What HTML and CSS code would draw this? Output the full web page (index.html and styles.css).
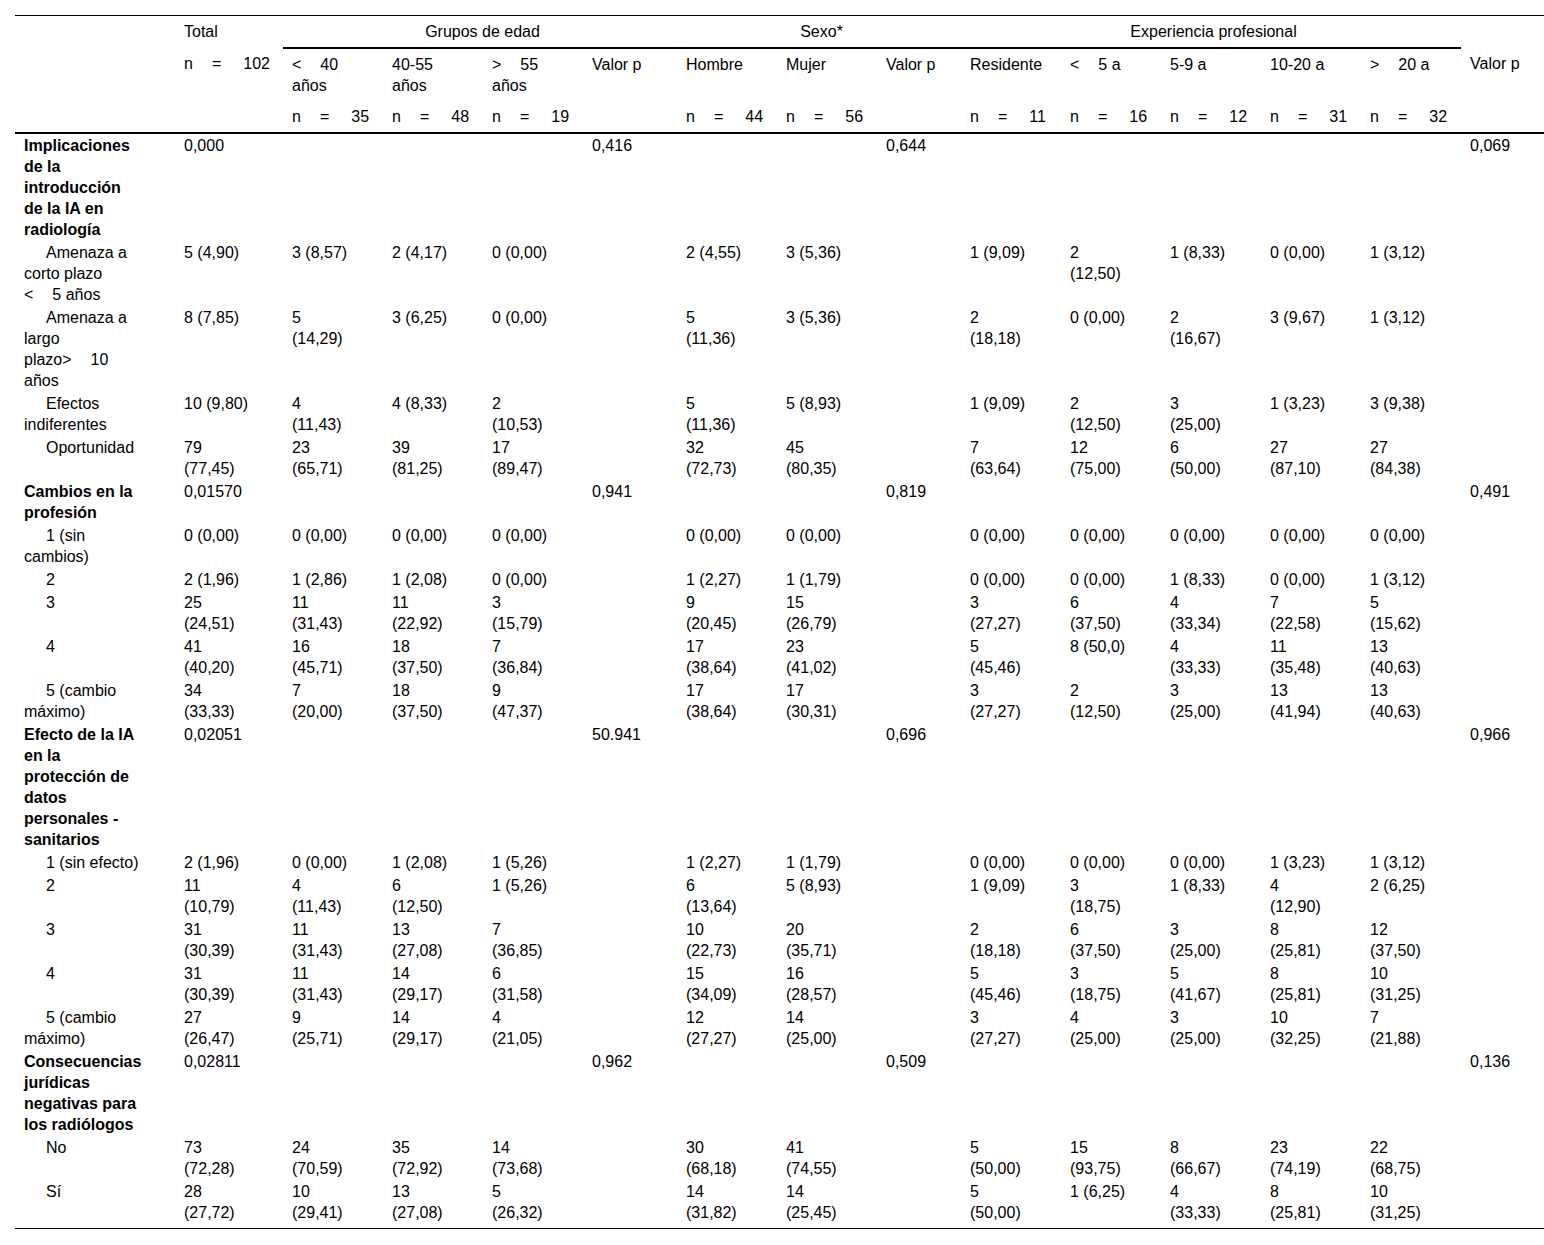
FILE: index.html
```html
<!DOCTYPE html>
<html lang="es">
<head>
<meta charset="utf-8">
<title>Tabla</title>
<link rel="stylesheet" href="styles.css">
</head>
<body>
<div class="wrap">
<table class="tbl">
<colgroup>
<col class="c0"><col class="ct"><col class="cd"><col class="cd"><col class="cd"><col class="cp1"><col class="cd"><col class="cd"><col class="cp2"><col class="cd"><col class="cd"><col class="cd"><col class="cd"><col class="cd"><col class="cp3">
</colgroup>
<thead>
<tr class="h1">
<th></th>
<th>Total</th>
<th colspan="4" class="grp">Grupos de edad</th>
<th colspan="3" class="grp">Sexo*</th>
<th colspan="5" class="grp">Experiencia profesional</th>
<th></th>
</tr>
<tr class="h2">
<th></th>
<th>n<i class="g1"></i>=<i class="g2"></i>102</th>
<th>&lt;<i class="g"></i>40<br>años</th>
<th>40-55<br>años</th>
<th>&gt;<i class="g"></i>55<br>años</th>
<th>Valor p</th>
<th>Hombre</th>
<th>Mujer</th>
<th>Valor p</th>
<th>Residente</th>
<th>&lt;<i class="g"></i>5 a</th>
<th>5-9 a</th>
<th>10-20 a</th>
<th>&gt;<i class="g"></i>20 a</th>
<th>Valor p</th>
</tr>
<tr class="h3">
<th></th>
<th></th>
<th>n<i class="g1"></i>=<i class="g2"></i>35</th>
<th>n<i class="g1"></i>=<i class="g2"></i>48</th>
<th>n<i class="g1"></i>=<i class="g2"></i>19</th>
<th></th>
<th>n<i class="g1"></i>=<i class="g2"></i>44</th>
<th>n<i class="g1"></i>=<i class="g2"></i>56</th>
<th></th>
<th>n<i class="g1"></i>=<i class="g2"></i>11</th>
<th>n<i class="g1"></i>=<i class="g2"></i>16</th>
<th>n<i class="g1"></i>=<i class="g2"></i>12</th>
<th>n<i class="g1"></i>=<i class="g2"></i>31</th>
<th>n<i class="g1"></i>=<i class="g2"></i>32</th>
<th></th>
</tr>
</thead>
<tbody>
<tr>
<td class="lab sec">Implicaciones de la introducción de la IA en radiología</td>
<td>0,000</td><td></td><td></td><td></td><td>0,416</td><td></td><td></td><td>0,644</td><td></td><td></td><td></td><td></td><td></td><td>0,069</td>
</tr>
<tr>
<td class="lab sub">Amenaza a<br>corto plazo<br>&lt;<i class="g"></i>5 años</td>
<td>5 (4,90)</td><td>3 (8,57)</td><td>2 (4,17)</td><td>0 (0,00)</td><td></td><td>2 (4,55)</td><td>3 (5,36)</td><td></td><td>1 (9,09)</td><td>2<br>(12,50)</td><td>1 (8,33)</td><td>0 (0,00)</td><td>1 (3,12)</td><td></td>
</tr>
<tr>
<td class="lab sub">Amenaza a<br>largo<br>plazo&gt;<i class="g"></i>10<br>años</td>
<td>8 (7,85)</td><td>5<br>(14,29)</td><td>3 (6,25)</td><td>0 (0,00)</td><td></td><td>5<br>(11,36)</td><td>3 (5,36)</td><td></td><td>2<br>(18,18)</td><td>0 (0,00)</td><td>2<br>(16,67)</td><td>3 (9,67)</td><td>1 (3,12)</td><td></td>
</tr>
<tr>
<td class="lab sub">Efectos indiferentes</td>
<td>10 (9,80)</td><td>4<br>(11,43)</td><td>4 (8,33)</td><td>2<br>(10,53)</td><td></td><td>5<br>(11,36)</td><td>5 (8,93)</td><td></td><td>1 (9,09)</td><td>2<br>(12,50)</td><td>3<br>(25,00)</td><td>1 (3,23)</td><td>3 (9,38)</td><td></td>
</tr>
<tr>
<td class="lab sub">Oportunidad</td>
<td>79<br>(77,45)</td><td>23<br>(65,71)</td><td>39<br>(81,25)</td><td>17<br>(89,47)</td><td></td><td>32<br>(72,73)</td><td>45<br>(80,35)</td><td></td><td>7<br>(63,64)</td><td>12<br>(75,00)</td><td>6<br>(50,00)</td><td>27<br>(87,10)</td><td>27<br>(84,38)</td><td></td>
</tr>
<tr>
<td class="lab sec">Cambios en la profesión</td>
<td>0,01570</td><td></td><td></td><td></td><td>0,941</td><td></td><td></td><td>0,819</td><td></td><td></td><td></td><td></td><td></td><td>0,491</td>
</tr>
<tr>
<td class="lab sub">1 (sin cambios)</td>
<td>0 (0,00)</td><td>0 (0,00)</td><td>0 (0,00)</td><td>0 (0,00)</td><td></td><td>0 (0,00)</td><td>0 (0,00)</td><td></td><td>0 (0,00)</td><td>0 (0,00)</td><td>0 (0,00)</td><td>0 (0,00)</td><td>0 (0,00)</td><td></td>
</tr>
<tr>
<td class="lab sub">2</td>
<td>2 (1,96)</td><td>1 (2,86)</td><td>1 (2,08)</td><td>0 (0,00)</td><td></td><td>1 (2,27)</td><td>1 (1,79)</td><td></td><td>0 (0,00)</td><td>0 (0,00)</td><td>1 (8,33)</td><td>0 (0,00)</td><td>1 (3,12)</td><td></td>
</tr>
<tr>
<td class="lab sub">3</td>
<td>25<br>(24,51)</td><td>11<br>(31,43)</td><td>11<br>(22,92)</td><td>3<br>(15,79)</td><td></td><td>9<br>(20,45)</td><td>15<br>(26,79)</td><td></td><td>3<br>(27,27)</td><td>6<br>(37,50)</td><td>4<br>(33,34)</td><td>7<br>(22,58)</td><td>5<br>(15,62)</td><td></td>
</tr>
<tr>
<td class="lab sub">4</td>
<td>41<br>(40,20)</td><td>16<br>(45,71)</td><td>18<br>(37,50)</td><td>7<br>(36,84)</td><td></td><td>17<br>(38,64)</td><td>23<br>(41,02)</td><td></td><td>5<br>(45,46)</td><td>8 (50,0)</td><td>4<br>(33,33)</td><td>11<br>(35,48)</td><td>13<br>(40,63)</td><td></td>
</tr>
<tr>
<td class="lab sub">5 (cambio máximo)</td>
<td>34<br>(33,33)</td><td>7<br>(20,00)</td><td>18<br>(37,50)</td><td>9<br>(47,37)</td><td></td><td>17<br>(38,64)</td><td>17<br>(30,31)</td><td></td><td>3<br>(27,27)</td><td>2<br>(12,50)</td><td>3<br>(25,00)</td><td>13<br>(41,94)</td><td>13<br>(40,63)</td><td></td>
</tr>
<tr>
<td class="lab sec">Efecto de la IA en la protección de datos personales - sanitarios</td>
<td>0,02051</td><td></td><td></td><td></td><td>50.941</td><td></td><td></td><td>0,696</td><td></td><td></td><td></td><td></td><td></td><td>0,966</td>
</tr>
<tr>
<td class="lab sub">1 (sin efecto)</td>
<td>2 (1,96)</td><td>0 (0,00)</td><td>1 (2,08)</td><td>1 (5,26)</td><td></td><td>1 (2,27)</td><td>1 (1,79)</td><td></td><td>0 (0,00)</td><td>0 (0,00)</td><td>0 (0,00)</td><td>1 (3,23)</td><td>1 (3,12)</td><td></td>
</tr>
<tr>
<td class="lab sub">2</td>
<td>11<br>(10,79)</td><td>4<br>(11,43)</td><td>6<br>(12,50)</td><td>1 (5,26)</td><td></td><td>6<br>(13,64)</td><td>5 (8,93)</td><td></td><td>1 (9,09)</td><td>3<br>(18,75)</td><td>1 (8,33)</td><td>4<br>(12,90)</td><td>2 (6,25)</td><td></td>
</tr>
<tr>
<td class="lab sub">3</td>
<td>31<br>(30,39)</td><td>11<br>(31,43)</td><td>13<br>(27,08)</td><td>7<br>(36,85)</td><td></td><td>10<br>(22,73)</td><td>20<br>(35,71)</td><td></td><td>2<br>(18,18)</td><td>6<br>(37,50)</td><td>3<br>(25,00)</td><td>8<br>(25,81)</td><td>12<br>(37,50)</td><td></td>
</tr>
<tr>
<td class="lab sub">4</td>
<td>31<br>(30,39)</td><td>11<br>(31,43)</td><td>14<br>(29,17)</td><td>6<br>(31,58)</td><td></td><td>15<br>(34,09)</td><td>16<br>(28,57)</td><td></td><td>5<br>(45,46)</td><td>3<br>(18,75)</td><td>5<br>(41,67)</td><td>8<br>(25,81)</td><td>10<br>(31,25)</td><td></td>
</tr>
<tr>
<td class="lab sub">5 (cambio máximo)</td>
<td>27<br>(26,47)</td><td>9<br>(25,71)</td><td>14<br>(29,17)</td><td>4<br>(21,05)</td><td></td><td>12<br>(27,27)</td><td>14<br>(25,00)</td><td></td><td>3<br>(27,27)</td><td>4<br>(25,00)</td><td>3<br>(25,00)</td><td>10<br>(32,25)</td><td>7<br>(21,88)</td><td></td>
</tr>
<tr>
<td class="lab sec">Consecuencias jurídicas negativas para los radiólogos</td>
<td>0,02811</td><td></td><td></td><td></td><td>0,962</td><td></td><td></td><td>0,509</td><td></td><td></td><td></td><td></td><td></td><td>0,136</td>
</tr>
<tr>
<td class="lab sub">No</td>
<td>73<br>(72,28)</td><td>24<br>(70,59)</td><td>35<br>(72,92)</td><td>14<br>(73,68)</td><td></td><td>30<br>(68,18)</td><td>41<br>(74,55)</td><td></td><td>5<br>(50,00)</td><td>15<br>(93,75)</td><td>8<br>(66,67)</td><td>23<br>(74,19)</td><td>22<br>(68,75)</td><td></td>
</tr>
<tr class="last">
<td class="lab sub">Sí</td>
<td>28<br>(27,72)</td><td>10<br>(29,41)</td><td>13<br>(27,08)</td><td>5<br>(26,32)</td><td></td><td>14<br>(31,82)</td><td>14<br>(25,45)</td><td></td><td>5<br>(50,00)</td><td>1 (6,25)</td><td>4<br>(33,33)</td><td>8<br>(25,81)</td><td>10<br>(31,25)</td><td></td>
</tr>
</tbody>
</table>
</div>
</body>
</html>
```

FILE: styles.css
```css
html, body {
  margin: 0;
  padding: 0;
  background: #ffffff;
}

body {
  font-family: "Liberation Sans", Arial, sans-serif;
  font-size: 16px;
  line-height: 21px;
  color: #000000;
}

.wrap {
  padding: 15px 0 0 15px;
}

.tbl {
  width: 1529px;
  table-layout: fixed;
  border-collapse: collapse;
  border-spacing: 0;
}

.c0 { width: 160px; }
.ct { width: 108px; }
.cd { width: 100px; }
.cp1 { width: 94px; }
.cp2 { width: 84px; }
.cp3 { width: 83px; }

.tbl th,
.tbl td {
  text-align: left;
  vertical-align: top;
  font-weight: normal;
  padding: 1px 4px 1px 9px;
  white-space: nowrap;
}

.tbl thead th {
  padding-top: 5px;
  padding-bottom: 5px;
}

.tbl .h1 th {
  border-top: 1px solid #000;
  padding-top: 5px;
  padding-bottom: 5px;
}

.tbl .h1 th.grp {
  text-align: center;
  border-bottom: 2px solid #000;
}

.tbl .h3 th {
  border-bottom: 2px solid #000;
}

.tbl .last td {
  border-bottom: 1px solid #000;
  padding-bottom: 5px;
}

.tbl td.lab {
  white-space: normal;
  padding-right: 32px;
}

.tbl td.sec {
  font-weight: bold;
}

.tbl td.sub {
  text-indent: 22px;
}

.g, .g1, .g2 {
  display: inline-block;
  width: 19px;
}

.g2 {
  width: 22px;
}
```
